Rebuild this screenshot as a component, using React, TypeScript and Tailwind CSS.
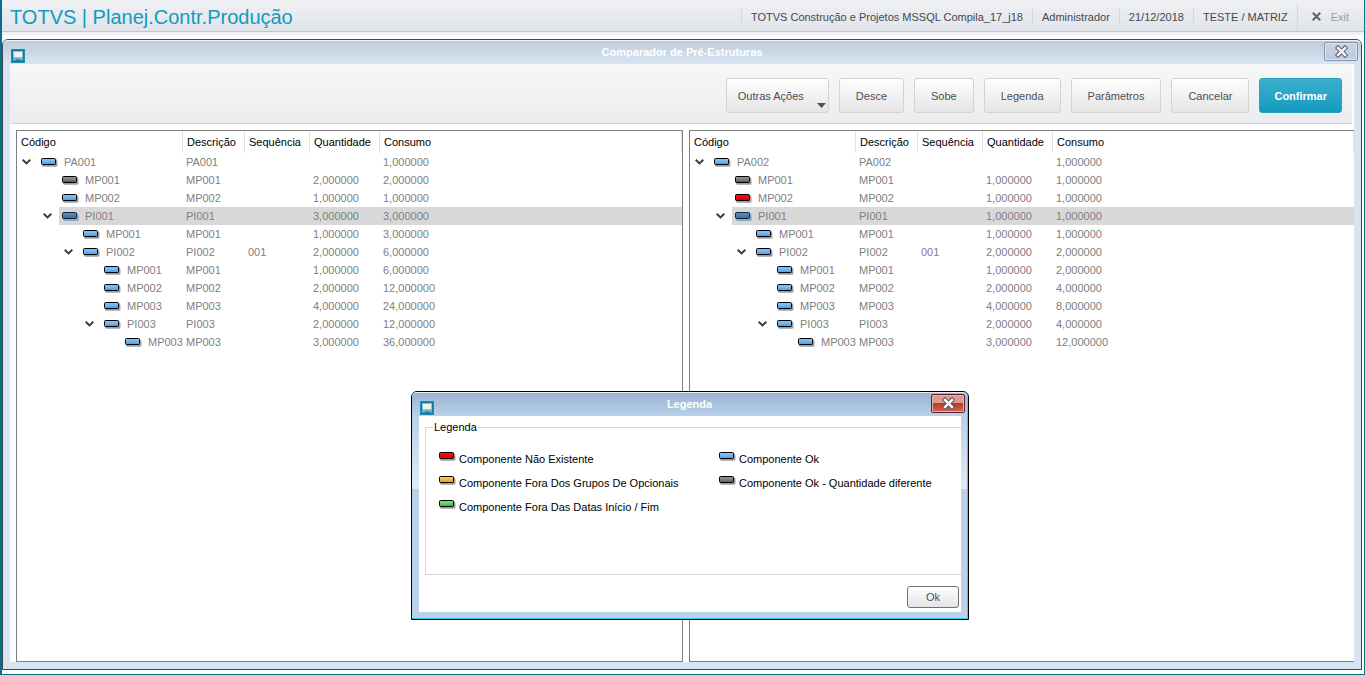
import { useId, useState } from 'react';
import clsx from 'clsx';

type Status = 'ok' | 'diff' | 'missing' | 'optional' | 'date';

interface TreeRow {
  level: number;
  code: string;
  status: Status;
  open?: boolean;
  seq?: string;
  qty: string;
  total: string;
}

const COLUMNS = ['Código', 'Descrição', 'Sequência', 'Quantidade', 'Consumo'];

const LEFT_ROWS: TreeRow[] = [
  { level: 0, code: 'PA001', status: 'ok', open: true, qty: '', total: '1,000000' },
  { level: 1, code: 'MP001', status: 'diff', qty: '2,000000', total: '2,000000' },
  { level: 1, code: 'MP002', status: 'ok', qty: '1,000000', total: '1,000000' },
  { level: 1, code: 'PI001', status: 'ok', open: true, qty: '3,000000', total: '3,000000' },
  { level: 2, code: 'MP001', status: 'ok', qty: '1,000000', total: '3,000000' },
  { level: 2, code: 'PI002', status: 'ok', open: true, seq: '001', qty: '2,000000', total: '6,000000' },
  { level: 3, code: 'MP001', status: 'ok', qty: '1,000000', total: '6,000000' },
  { level: 3, code: 'MP002', status: 'ok', qty: '2,000000', total: '12,000000' },
  { level: 3, code: 'MP003', status: 'ok', qty: '4,000000', total: '24,000000' },
  { level: 3, code: 'PI003', status: 'ok', open: true, qty: '2,000000', total: '12,000000' },
  { level: 4, code: 'MP003', status: 'ok', qty: '3,000000', total: '36,000000' },
];

const RIGHT_ROWS: TreeRow[] = [
  { level: 0, code: 'PA002', status: 'ok', open: true, qty: '', total: '1,000000' },
  { level: 1, code: 'MP001', status: 'diff', qty: '1,000000', total: '1,000000' },
  { level: 1, code: 'MP002', status: 'missing', qty: '1,000000', total: '1,000000' },
  { level: 1, code: 'PI001', status: 'ok', open: true, qty: '1,000000', total: '1,000000' },
  { level: 2, code: 'MP001', status: 'ok', qty: '1,000000', total: '1,000000' },
  { level: 2, code: 'PI002', status: 'ok', open: true, seq: '001', qty: '2,000000', total: '2,000000' },
  { level: 3, code: 'MP001', status: 'ok', qty: '1,000000', total: '2,000000' },
  { level: 3, code: 'MP002', status: 'ok', qty: '2,000000', total: '4,000000' },
  { level: 3, code: 'MP003', status: 'ok', qty: '4,000000', total: '8,000000' },
  { level: 3, code: 'PI003', status: 'ok', open: true, qty: '2,000000', total: '4,000000' },
  { level: 4, code: 'MP003', status: 'ok', qty: '3,000000', total: '12,000000' },
];

const LEGEND: { status: Status; label: string }[][] = [
  [
    { status: 'missing', label: 'Componente Não Existente' },
    { status: 'optional', label: 'Componente Fora Dos Grupos De Opcionais' },
    { status: 'date', label: 'Componente Fora Das Datas Início / Fim' },
  ],
  [
    { status: 'ok', label: 'Componente Ok' },
    { status: 'diff', label: 'Componente Ok - Quantidade diferente' },
  ],
];

const FILLS: Record<Status, [string, string]> = {
  ok: ['#7cc0f8', '#4b9ade'],
  diff: ['#8c8c8c', '#555555'],
  missing: ['#ff0808', '#d40000'],
  optional: ['#ffc444', '#e0a020'],
  date: ['#6fe070', '#33b04c'],
};

const INDENTS = ['', 'pl-[21px]', 'pl-[42px]', 'pl-[63px]', 'pl-[84px]'];

function StatusIcon({ status, selected = false }: { status: Status; selected?: boolean }) {
  const id = useId();
  const [from, to] = selected ? ['#5b87ab', '#3b6890'] : FILLS[status];
  return (
    <svg width="17" height="10" viewBox="0 0 17 10" className="shrink-0" aria-hidden="true">
      <defs>
        <linearGradient id={id} x1="0" y1="0" x2="0" y2="1">
          <stop offset="0.3" stopColor={from} />
          <stop offset="1" stopColor={to} />
        </linearGradient>
      </defs>
      <rect x="1" y="2" width="16" height="7" rx="2" fill={selected ? '#7fa8cc' : '#000000'} opacity={selected ? 0.8 : 0.18} />
      <rect x="1" y="1" width="15" height="7.5" rx="1" fill={selected ? '#7fa8cc' : '#000000'} opacity={selected ? 0.8 : 0.25} />
      <rect x="0.5" y="0.5" width="14" height="6" rx="1" fill={`url(#${id})`} stroke={selected ? '#0c2740' : '#000000'} />
    </svg>
  );
}

function Chevron() {
  return (
    <svg width="9" height="6" viewBox="0 0 9 6" fill="none" className="block" aria-hidden="true">
      <path d="M0.7 0.8 L4.5 4.4 L8.3 0.8" stroke="#3c3c3c" strokeWidth="2" />
    </svg>
  );
}

function WindowIcon() {
  return (
    <svg width="14" height="14" viewBox="0 0 14 14" aria-hidden="true">
      <rect width="14" height="14" fill="#0b7a9e" />
      <rect x="0.5" y="0.5" width="13" height="13" fill="none" stroke="#1a90b3" />
      <rect x="2.5" y="2.5" width="9" height="6" fill="#f1f1ef" stroke="#8fc0d0" />
      <path d="M2.5 9 H11.5 L12.5 11.5 H1.5 Z" fill="#7db4c6" />
      <path d="M5 11 H9" stroke="#0b6f90" />
    </svg>
  );
}

function CloseGlyph() {
  return (
    <svg width="13" height="13" viewBox="0 0 13 13" strokeLinecap="square" aria-hidden="true">
      <path d="M3 3 L10 10 M10 3 L3 10" stroke="#4a4f5f" strokeWidth="4.4" />
      <path d="M3 3 L10 10 M10 3 L3 10" stroke="#f6f6f6" strokeWidth="2.5" />
    </svg>
  );
}

function ToolButton({ label }: { label: string }) {
  return (
    <button className="h-[35px] rounded-[3px] border border-[#d3d3d3] bg-linear-to-b from-[#fefefe] to-[#e5e5e5] px-4 text-[#4b4f57]">
      {label}
    </button>
  );
}

function TreePane({ rows, className = '' }: { rows: TreeRow[]; className?: string }) {
  const [selected, setSelected] = useState(3);

  return (
    <div className={clsx('min-w-0 overflow-hidden border-y border-l border-[#7f7f7f] bg-white', className)}>
      <table className="w-full table-fixed border-separate border-spacing-0 text-left">
        <colgroup>
          <col className="w-[166px]" />
          <col className="w-[62px]" />
          <col className="w-[65px]" />
          <col className="w-[70px]" />
          <col />
        </colgroup>
        <thead>
          <tr className="h-[22px]">
            {COLUMNS.map((name) => (
              <th key={name} className="border-r border-[#e2e2e2] p-0 pl-1 font-normal text-black">
                {name}
              </th>
            ))}
          </tr>
        </thead>
        <tbody className="text-[#808080]">
          {rows.map((row, i) => {
            const active = i === selected;
            const cell = clsx('p-0 pl-[3px]', active && 'bg-[#d8d8d8]');
            return (
              <tr key={i} className="h-[18px]" onClick={() => setSelected(i)}>
                <td className="p-0">
                  <div className={clsx('flex h-[18px]', INDENTS[row.level])}>
                    <div className="flex w-[21px] shrink-0 items-center pl-[5px]">
                      {row.open && (
                        <button aria-label={`Recolher ${row.code}`}>
                          <Chevron />
                        </button>
                      )}
                    </div>
                    <div className={clsx('flex flex-1 items-center gap-[6px] pl-[3px]', active && 'bg-[#d8d8d8]')}>
                      <span className="pt-[2px]">
                        <StatusIcon status={row.status} selected={active} />
                      </span>
                      <span>{row.code}</span>
                    </div>
                  </div>
                </td>
                <td className={cell}>{row.code}</td>
                <td className={cell}>{row.seq}</td>
                <td className={cell}>{row.qty}</td>
                <td className={cell}>{row.total}</td>
              </tr>
            );
          })}
        </tbody>
      </table>
    </div>
  );
}

function TopBar() {
  return (
    <header className="flex h-8 shrink-0 items-center justify-between border-b border-[#c3c6cd] bg-linear-to-b from-[#f0f1f3] to-[#e0e4ea] pl-2 text-[#45484f]">
      <h1 className="pt-[2px] text-[20px] leading-6 text-[#119bc1]">TOTVS | Planej.Contr.Produção</h1>
      <div className="flex h-full items-center pt-[2px]">
        {['TOTVS Construção e Projetos MSSQL Compila_17_j18', 'Administrador', '21/12/2018', 'TESTE / MATRIZ'].map((text) => (
          <span key={text} className="border-l border-[#d5d9d9] px-[9px] leading-[18px]">
            {text}
          </span>
        ))}
        <button className="flex h-7 items-center gap-[10px] border-l border-[#d5d9d9] pr-[15px] pl-[14px] text-[#9b9ea4]">
          <svg width="9" height="9" viewBox="0 0 9 9" aria-hidden="true">
            <path d="M0.8 0.8 L8.2 8.2 M8.2 0.8 L0.8 8.2" stroke="#5d6270" strokeWidth="2" />
          </svg>
          Exit
        </button>
      </div>
    </header>
  );
}

function LegendDialog({ onClose }: { onClose: () => void }) {
  return (
    <div
      role="dialog"
      aria-label="Legenda"
      className="absolute top-[391px] left-[409px] w-[558px] rounded-t-[6px] border border-black bg-[#b9d1ea]"
    >
      <div className="rounded-t-[5px] border-r border-b border-[#35d0e8]">
        <div className="relative flex h-6 items-end justify-between rounded-t-[5px] border-t border-[#e4edf6] bg-linear-to-b from-[#99b4d1] to-[#b9d1ea] pr-[2px] pb-px pl-2">
          <WindowIcon />
          <h2 className="absolute inset-x-0 top-0 text-center leading-[22px] font-bold text-white">Legenda</h2>
          <button
            onClick={onClose}
            aria-label="Fechar"
            className="relative mb-[2px] flex h-[19px] w-[34px] items-center justify-center rounded-[2px] border border-[#5c1f2b] bg-linear-to-b from-[#dd9a8e] from-45% via-[#b8392a] via-50% to-[#cf6a56] shadow-[inset_0_0_0_1px_#e8b5ab]"
          >
            <CloseGlyph />
          </button>
        </div>
        <div className="bg-linear-to-b from-[#b9d1ea] to-[#dfeaf6] bg-[length:100%_73px] bg-no-repeat pr-[6px] pb-[6px] pl-[7px]">
          <div className="bg-white pt-1 pl-[6px]">
            <fieldset className="h-[155px] border border-r-0 border-[#d8d8d8]">
              <legend className="ml-[7px] px-px leading-[14px] text-black">Legenda</legend>
              <div className="grid grid-cols-[280px_1fr] pt-[13px] pl-[13px]">
                {LEGEND.map((group, i) => (
                  <ul key={i}>
                    {group.map((item) => (
                      <li key={item.label} className="flex h-6 items-center gap-[3px] text-black">
                        <span className="pb-1">
                          <StatusIcon status={item.status} />
                        </span>
                        {item.label}
                      </li>
                    ))}
                  </ul>
                ))}
              </div>
            </fieldset>
            <div className="flex justify-end pt-[11px] pr-[2px] pb-1">
              <button
                onClick={onClose}
                className="h-[22px] w-[52px] rounded-[3px] border border-[#6d717c] bg-linear-to-b from-[#fefefe] to-[#e5e5e5] text-[#4b4f57]"
              >
                Ok
              </button>
            </div>
          </div>
        </div>
      </div>
    </div>
  );
}

export default function App() {
  const [showLegend, setShowLegend] = useState(true);

  return (
    <div className="relative flex h-screen flex-col border-r border-b border-l-2 border-[#056f8c] border-r-[#0e7480] bg-[#fdfdfd] font-['Liberation_Sans',Arial,sans-serif] text-[11px] leading-[14px]">
      <TopBar />
      <div className="h-[3px] shrink-0 bg-[#f0f0f2]" />

      <main className="mt-1 mr-[2px] mb-1 flex min-h-0 flex-1 flex-col rounded-t-[6px] border border-[#454545] bg-[#d7e4f2]">
        <div className="relative flex h-6 shrink-0 items-end justify-between rounded-t-[5px] border-t border-[#eef3f8] bg-linear-to-b from-[#bfcddb] to-[#d7e4f2] pr-[3px] pb-px pl-2">
          <WindowIcon />
          <h2 className="absolute inset-x-0 top-0 text-center leading-[22px] font-bold text-white">Comparador de Pré-Estruturas</h2>
          <button
            aria-label="Fechar"
            className="relative mb-[2px] flex h-[19px] w-[34px] items-center justify-center rounded-[2px] border border-[#8591ad] bg-linear-to-b from-[#c9d3e0] to-[#bccbdd] shadow-[inset_0_0_0_1px_#dce5f0]"
          >
            <CloseGlyph />
          </button>
        </div>

        <div className="mr-[7px] mb-[7px] ml-[7px] flex min-h-0 flex-1 flex-col bg-white">
          <div className="mr-[2px] flex h-[60px] shrink-0 items-center justify-end gap-[10px] border-b border-[#d3d3d3] bg-linear-to-b from-[#f6f8f7] to-[#ececef] pt-1 pr-[10px]">
            <button className="relative h-[35px] rounded-[3px] border border-[#d3d3d3] bg-linear-to-b from-[#fefefe] to-[#e5e5e5] pr-6 pl-[11px] text-[#4b4f57]">
              Outras Ações
              <svg width="9" height="5" viewBox="0 0 9 5" className="absolute right-[2px] bottom-1" aria-hidden="true">
                <path d="M0 0 H9 L4.5 5 Z" fill="#4b4f57" />
              </svg>
            </button>
            {['Desce', 'Sobe', 'Legenda', 'Parâmetros', 'Cancelar'].map((label) => (
              <ToolButton key={label} label={label} />
            ))}
            <button className="h-[35px] rounded-[3px] border border-[#2f9fbe] bg-linear-to-b from-[#3aafcd] to-[#0f9bc0] px-[14px] font-bold text-white">
              Confirmar
            </button>
          </div>

          <div className="grid min-h-0 flex-1 grid-cols-[667fr_665fr] gap-[6px] pt-[6px] pl-[6px]">
            <TreePane rows={LEFT_ROWS} className="border-r" />
            <TreePane rows={RIGHT_ROWS} />
          </div>
        </div>
      </main>

      {showLegend && <LegendDialog onClose={() => setShowLegend(false)} />}
    </div>
  );
}
